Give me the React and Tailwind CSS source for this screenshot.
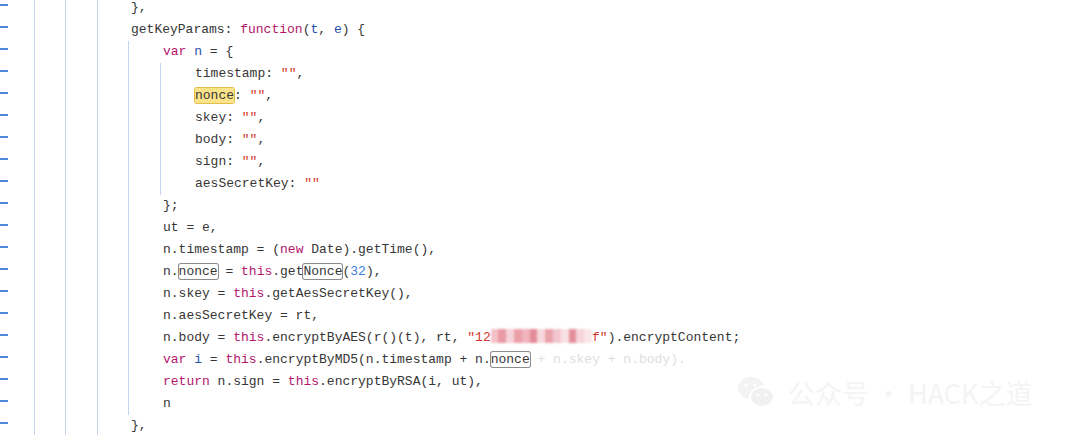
import React from "react";

const KW = "text-[#b3166c]";
const VAR = "text-[#2450a8]";
const STR = "text-[#d2362c]";

const K = ({ children }) => <span className={KW}>{children}</span>;
const V = ({ children }) => <span className={VAR}>{children}</span>;
const S = ({ children }) => <span className={STR}>{children}</span>;
const Box = ({ children }) => (
  <span className="rounded-[2px] ring-1 ring-[#8c8c8c]">{children}</span>
);

const Line = ({ children }) => (
  <div className="h-[22px] pl-[3px] whitespace-pre">{children}</div>
);

const Block = ({ children, pad = "pl-[31px]" }) => (
  <div className={`border-l border-[#c3d5ef] ${pad}`}>{children}</div>
);

// mosaic over the secret part of the key
const mosaic = [
  "bg-[#f2c2c8]", "bg-[#e99aa5]", "bg-[#f5d3d8]", "bg-[#ec9fa9]",
  "bg-[#f0b5bd]", "bg-[#e48d99]", "bg-[#f6d9dd]", "bg-[#eaa3ac]",
  "bg-[#f3c7cd]", "bg-[#f8e2e5]", "bg-[#e3909b]", "bg-[#f6d6da]", "bg-[#f9e6e8]",
];

const Blurred = () => (
  <span className="inline-flex align-middle h-[14px] -mt-[3px] blur-[1px]">
    {mosaic.map((c, i) => (
      <span key={i} className={`w-[7.8px] h-full ${c}`} />
    ))}
  </span>
);

const WeChat = () => (
  <svg width="40" height="34" viewBox="0 0 40 34">
    <ellipse cx="15" cy="13" rx="13" ry="11" fill="#f3f3f3" />
    <ellipse cx="26" cy="22" rx="12" ry="10" fill="#f1f1f1" stroke="#fff" strokeWidth="2" />
    <circle cx="10" cy="10" r="1.6" fill="#fff" />
    <circle cx="19" cy="10" r="1.6" fill="#fff" />
    <circle cx="22" cy="20" r="1.4" fill="#fff" />
    <circle cx="30" cy="20" r="1.4" fill="#fff" />
  </svg>
);

export default function App() {
  return (
    <div className="relative w-[1080px] h-[435px] overflow-hidden bg-white">
      <div
        className="flex -mt-[3px] text-[13px] leading-[22px] text-[#363636]"
        style={{ fontFamily: '"Liberation Mono", "DejaVu Sans Mono", monospace' }}
      >
        <div className="w-[34px] shrink-0">
          {Array.from({ length: 20 }).map((_, i) => (
            <div key={i} className="h-[22px] pt-[7px]">
              <div className="w-[8px] h-[2px] bg-[#4f88d6]" />
            </div>
          ))}
        </div>
        <Block pad="pl-[30px]">
          <Block>
            <Block pad="pl-[30px]">
              <Line>},</Line>
              <Line>
                getKeyParams: <K>function</K>(<V>t</V>, <V>e</V>) {"{"}
              </Line>
              <Block>
                <Line>
                  <K>var</K> <V>n</V> = {"{"}
                </Line>
                <Block>
                  <Line>
                    timestamp: <S>""</S>,
                  </Line>
                  <Line>
                    <span className="bg-[#fbe38a] rounded-[2px] ring-1 ring-[#e3bf4a]">nonce</span>:{" "}
                    <S>""</S>,
                  </Line>
                  <Line>
                    skey: <S>""</S>,
                  </Line>
                  <Line>
                    body: <S>""</S>,
                  </Line>
                  <Line>
                    sign: <S>""</S>,
                  </Line>
                  <Line>
                    aesSecretKey: <S>""</S>
                  </Line>
                </Block>
                <Line>{"};"}</Line>
                <Line>ut = e,</Line>
                <Line>
                  n.timestamp = (<K>new</K> Date).getTime(),
                </Line>
                <Line>
                  n.<Box>nonce</Box> = <K>this</K>.get<Box>Nonce</Box>(
                  <span className="text-[#3d7fdc]">32</span>),
                </Line>
                <Line>
                  n.skey = <K>this</K>.getAesSecretKey(),
                </Line>
                <Line>n.aesSecretKey = rt,</Line>
                <Line>
                  n.body = <K>this</K>.encryptByAES(r()(t), rt, <S>"12</S>
                  <Blurred />
                  <S>f"</S>).encryptContent;
                </Line>
                <Line>
                  <K>var</K> <V>i</V> = <K>this</K>.encryptByMD5(n.timestamp + n.
                  <Box>nonce</Box>
                  <span className="text-[#dedede]"> + n.skey + n.body).</span>
                </Line>
                <Line>
                  <K>return</K> n.sign = <K>this</K>.encryptByRSA(i, ut),
                </Line>
                <Line>n</Line>
              </Block>
              <Line>},</Line>
            </Block>
          </Block>
        </Block>
      </div>
      <div
        className="absolute left-[736px] top-[375px] flex items-center gap-[12px] text-[27px] leading-none text-[#f4f4f4]"
        style={{ fontFamily: '"Noto Sans CJK SC", "Noto Sans", sans-serif' }}
      >
        <WeChat />
        <span>公众号 · HACK之道</span>
      </div>
    </div>
  );
}
